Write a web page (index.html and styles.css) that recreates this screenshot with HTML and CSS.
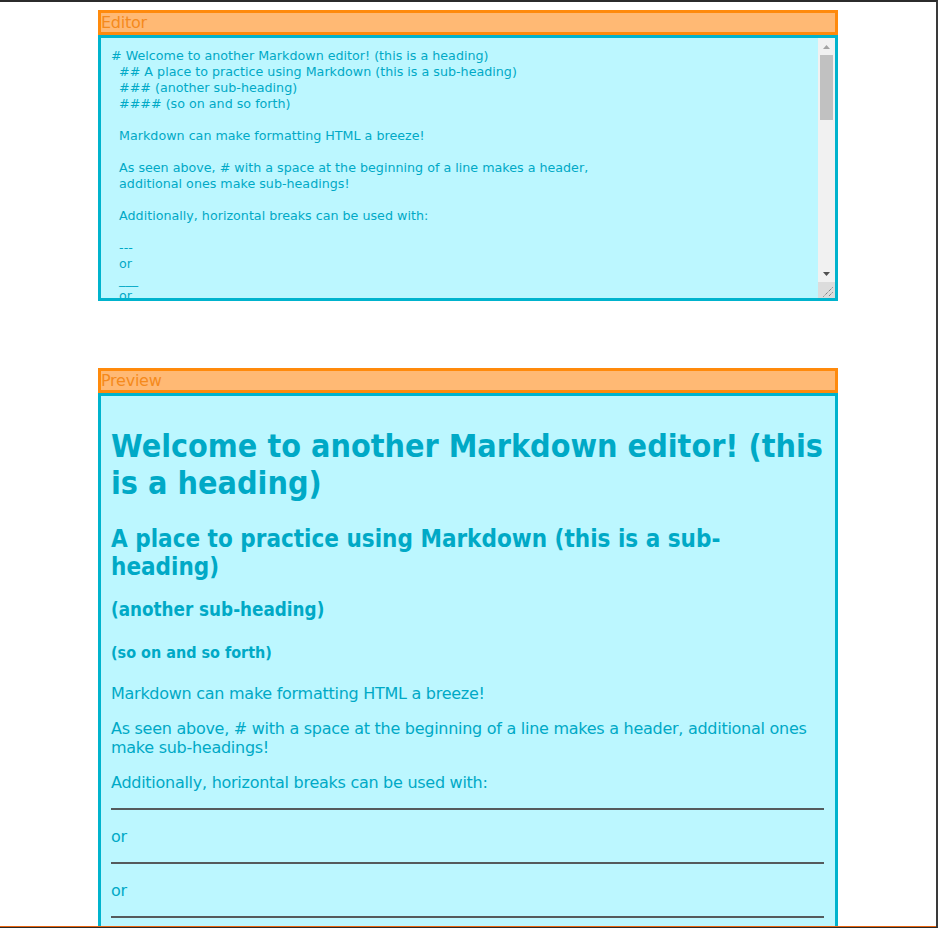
FILE: index.html
```html
<!DOCTYPE html>
<html lang="en">
<head>
<meta charset="utf-8">
<title>Markdown Previewer</title>
<link rel="stylesheet" href="styles.css">
</head>
<body>
<div class="frame"></div>
<main class="app">
  <section class="panel editor-panel">
    <div class="toolbar">Editor</div>
    <div class="editor-box">
      <textarea id="editor" class="editor" spellcheck="false"># Welcome to another Markdown editor! (this is a heading)
  ## A place to practice using Markdown (this is a sub-heading)
  ### (another sub-heading)
  #### (so on and so forth)

  Markdown can make formatting HTML a breeze!

  As seen above, # with a space at the beginning of a line makes a header,
  additional ones make sub-headings!

  Additionally, horizontal breaks can be used with:

  ---
  or
  ___
  or
  ***

  You can also make text **bold**, or _italic_!</textarea>
      <div class="scrollbar" aria-hidden="true">
        <div class="sb-btn sb-up">
          <svg width="7" height="4" viewBox="0 0 7 4"><path d="M0 4 L3.5 0 L7 4 Z" fill="#a3a3a3"/></svg>
        </div>
        <div class="sb-track">
          <div class="sb-thumb"></div>
        </div>
        <div class="sb-btn sb-down">
          <svg width="7" height="4" viewBox="0 0 7 4"><path d="M0 0 L7 0 L3.5 4 Z" fill="#505050"/></svg>
        </div>
        <div class="sb-corner">
          <svg width="16" height="16" viewBox="0 0 16 16"><path d="M14.5 5.5 L5.5 14.5 M14.5 10.5 L10.5 14.5" stroke="#5a5a5a" stroke-width="1" stroke-dasharray="1 1"/></svg>
        </div>
      </div>
    </div>
  </section>

  <section class="panel preview-panel">
    <div class="toolbar">Preview</div>
    <div id="preview" class="preview">
      <h1>Welcome to another Markdown editor! (this is a heading)</h1>
      <h2>A place to practice using Markdown (this is a sub-heading)</h2>
      <h3>(another sub-heading)</h3>
      <h4>(so on and so forth)</h4>
      <p>Markdown can make formatting HTML a breeze!</p>
      <p>As seen above, # with a space at the beginning of a line makes a header, additional ones make sub-headings!</p>
      <p>Additionally, horizontal breaks can be used with:</p>
      <hr>
      <p>or</p>
      <hr>
      <p>or</p>
      <hr>
      <p>You can also make text <strong>bold</strong>, or <em>italic</em>!</p>
    </div>
  </section>
</main>
</body>
</html>
```

FILE: styles.css
```css
html {
  overflow: hidden;
  height: 100%;
}

body {
  margin: 0;
  height: 100%;
  background: #ffffff;
  font-family: "DejaVu Sans", Verdana, sans-serif;
  color: #00a9c6;
}

.frame {
  position: fixed;
  inset: 0;
  border-top: 2px solid #2b2b2b;
  border-right: 2px solid #3a3a3a;
  border-bottom: 1px solid #2b2b2b;
  box-shadow: inset 0 -1px 0 #e86410;
  pointer-events: none;
  z-index: 10;
}

.app {
  width: 740px;
  margin: 0 auto;
  padding: 10px 0 0;
  transform: translateX(-1px);
  display: flex;
  flex-direction: column;
  gap: 67px;
}

.panel {
  display: flex;
  flex-direction: column;
}

.toolbar {
  height: 19px;
  border: 3px solid #ff8a0c;
  background: #ffb974;
  color: #f58a1c;
  font-size: 16px;
  line-height: 19px;
  letter-spacing: -0.25px;
}

.editor-box {
  display: flex;
  height: 260px;
  border: 3px solid #00b3cd;
  background: #bcf7ff;
}

.editor {
  flex: 1;
  display: block;
  box-sizing: border-box;
  height: 100%;
  margin: 0;
  border: 0;
  background: transparent;
  color: #00a9c6;
  font-family: "DejaVu Sans", Verdana, sans-serif;
  font-size: 12.7px;
  line-height: 16px;
  padding: 10px 10px 0 10px;
  resize: none;
  outline: none;
  overflow: hidden;
}

.scrollbar {
  width: 17px;
  display: flex;
  flex-direction: column;
  background: #f1f1f1;
}

.sb-btn {
  height: 17px;
  display: flex;
  align-items: center;
  justify-content: center;
}

.sb-track {
  flex: 1;
  padding: 0 2px;
}

.sb-thumb {
  height: 65px;
  background: #c1c1c1;
}

.sb-corner {
  height: 16px;
  background: #dcdcdc;
  display: flex;
}

.preview {
  border: 3px solid #00b3cd;
  background: #bcf7ff;
  padding: 0 11px 10px 10px;
  min-height: 700px;
  color: #00a9c6;
}

.preview h1,
.preview h2,
.preview h3,
.preview h4 {
  font-family: "DejaVu Sans Condensed", "DejaVu Sans", sans-serif;
  font-stretch: condensed;
  font-weight: bold;
}

.preview h1 {
  font-size: 32px;
  line-height: 37px;
  margin: 32px 0 23px;
}

.preview h2 {
  font-size: 24px;
  line-height: 28px;
  margin: 0 0 18px;
}

.preview h3 {
  font-size: 18.7px;
  line-height: 22px;
  margin: 0 0 22px;
}

.preview h4 {
  font-size: 16px;
  line-height: 19px;
  margin: 0 0 22px;
}

.preview p {
  font-size: 16px;
  line-height: 19px;
  letter-spacing: -0.27px;
  margin: 0 0 16px;
}

.preview hr {
  border: 0;
  border-top: 2px solid #555a5c;
  margin: 0 0 17px;
  height: 0;
}
```
